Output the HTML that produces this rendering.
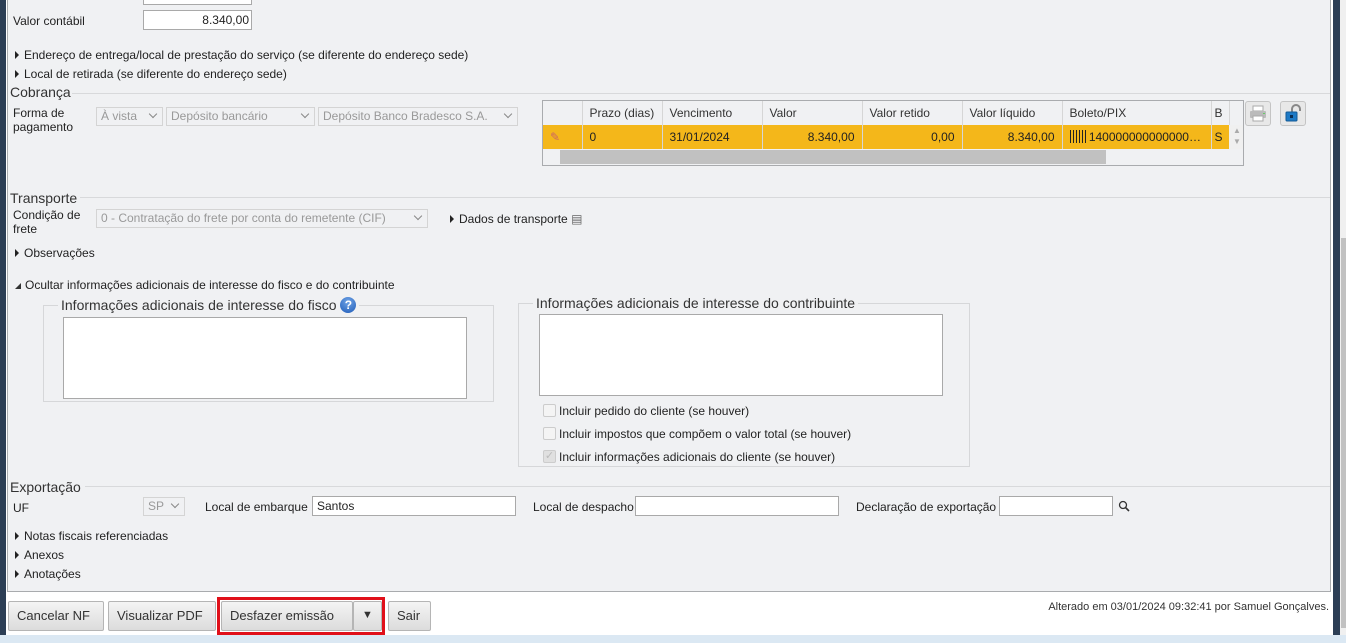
<!DOCTYPE html>
<html><head><meta charset="utf-8"><style>
*{box-sizing:border-box;margin:0;padding:0}
body{width:1346px;height:643px;overflow:hidden;background:#fff;font-family:"Liberation Sans",sans-serif;font-size:12px;color:#222;position:relative}
.a{position:absolute;white-space:nowrap}
.panel{position:absolute;left:7px;top:-2px;width:1324px;height:594px;background:#f0f1f3;border:1px solid #a9abae}
.inp{position:absolute;background:#fff;border:1px solid #a9a9a9;height:20px;font-size:12px;padding:2px 4px}
.sel{position:absolute;border:1px solid #d4d4d4;height:19px;color:#999;padding:1px 4px;background:#f0f1f3;font-size:12px;overflow:hidden}
.sel:after{content:"";position:absolute;right:6px;top:3px;width:5px;height:5px;border-right:1.5px solid #888;border-bottom:1.5px solid #888;transform:rotate(45deg)}
.tri{display:inline-block;width:0;height:0;border-left:4px solid #222;border-top:4px solid transparent;border-bottom:4px solid transparent;margin-right:5px;vertical-align:0}
.sec{font-size:14px;color:#333}
.hr{position:absolute;height:1px;background:#d8d9db}
.fs{position:absolute;border:1px solid #d6d7d9}
.ta{position:absolute;background:#fff;border:1px solid #a9a9a9}
.cb{position:absolute;width:13px;height:13px;border:1px solid #ccc;background:#f4f4f4;border-radius:2px}
.btn{position:absolute;top:601px;height:30px;background:linear-gradient(#f4f4f4,#dcdcdc);border:1px solid #b5b5b5;border-radius:2px;font-size:13px;color:#333;padding:6px 8px}
table{border-collapse:collapse;table-layout:fixed}
td{border-right:1px solid #d6d6d6;padding:0 7px;height:24px;overflow:hidden}
</style></head><body>
<div class="a" style="left:0;top:0;width:6px;height:643px;background:#2c3e55"></div>
<div class="a" style="left:1333px;top:0;width:7px;height:643px;background:#2c3e55"></div>
<div class="a" style="left:1340px;top:0;width:6px;height:643px;background:#f0f0f0"></div>
<div class="a" style="left:1341px;top:238px;width:5px;height:390px;background:#c1c1c1"></div>
<div class="a" style="left:0;top:635px;width:1346px;height:8px;background:#dbe8f3"></div>
<div class="panel"></div>

<div class="inp" style="left:143px;top:-10px;width:109px;height:15px"></div>
<div class="a" style="left:13px;top:14px">Valor contábil</div>
<div class="inp" style="left:143px;top:10px;width:109px;text-align:right;padding-right:2px">8.340,00</div>
<div class="a" style="left:15px;top:48px"><span class="tri"></span>Endereço de entrega/local de prestação do serviço (se diferente do endereço sede)</div>
<div class="a" style="left:15px;top:67px"><span class="tri"></span>Local de retirada (se diferente do endereço sede)</div>

<div class="a sec" style="left:10px;top:84px">Cobrança</div><div class="hr" style="left:72px;top:93px;width:1258px"></div>
<div class="a" style="left:13px;top:106px;line-height:14px">Forma de<br>pagamento</div>
<div class="sel" style="left:96px;top:107px;width:67px">À vista</div>
<div class="sel" style="left:166px;top:107px;width:149px">Depósito bancário</div>
<div class="sel" style="left:318px;top:107px;width:200px;padding-right:16px">Depósito Banco Bradesco S.A. aç</div>

<div class="a" style="left:542px;top:100px;width:702px;height:66px;border:1px solid #a9abae;background:#f0f1f3;overflow:hidden">
<table style="font-size:12px;color:#333;white-space:nowrap;width:686px">
<colgroup><col style="width:39px"><col style="width:80px"><col style="width:100px"><col style="width:100px"><col style="width:100px"><col style="width:100px"><col style="width:149px"><col style="width:18px"></colgroup>
<tr style="background:#f0f1f3"><td></td><td>Prazo (dias)</td><td>Vencimento</td><td>Valor</td><td>Valor retido</td><td>Valor líquido</td><td>Boleto/PIX</td><td style="padding:0 3px">B</td></tr>
<tr style="background:#f4b71a;color:#222"><td style="color:#c66">✎</td><td>0</td><td>31/01/2024</td><td style="text-align:right">8.340,00</td><td style="text-align:right">0,00</td><td style="text-align:right">8.340,00</td><td><span style="display:inline-block;width:16px;height:13px;vertical-align:-2px;background:repeating-linear-gradient(90deg,#222 0 1px,transparent 1px 3px)"></span> 140000000000000…</td><td style="padding:0 3px">S</td></tr>
</table>
<div class="a" style="left:17px;top:49px;width:546px;height:14px;background:#c1c1c1"></div>
<div class="a" style="left:686px;top:24px;width:16px;height:24px;background:#f0f0f0;color:#aaa;font-size:8px;text-align:center;line-height:11px">▲<br>▼</div>
</div>
<div class="a" style="left:1245px;top:101px;width:26px;height:25px;border:1px solid #c4c4c4;border-radius:3px;background:#e8e8e8">
<svg width="24" height="23" style="position:absolute;left:0;top:0"><rect x="7" y="4" width="10" height="5" fill="#fff" stroke="#aaa"/><rect x="4" y="9" width="16" height="7" rx="1" fill="#bbb"/><rect x="7" y="14" width="10" height="5" fill="#fff" stroke="#aaa"/><rect x="17" y="11" width="2" height="1" fill="#6c6"/></svg></div>
<div class="a" style="left:1280px;top:101px;width:26px;height:25px;border:1px solid #c4c4c4;border-radius:3px;background:#e8e8e8">
<svg width="24" height="23" style="position:absolute;left:0;top:0"><path d="M11 11 V7 a4 4 0 0 1 8 0 V9" fill="none" stroke="#888" stroke-width="2"/><rect x="5" y="10" width="11" height="9" rx="1" fill="#1e7ac6" stroke="#135a96"/><rect x="9" y="13" width="3" height="3" fill="#0b2f55"/></svg></div>

<div class="a sec" style="left:10px;top:190px">Transporte</div><div class="hr" style="left:80px;top:197px;width:1250px"></div>
<div class="a" style="left:13px;top:208px;line-height:14px">Condição de<br>frete</div>
<div class="sel" style="left:96px;top:209px;width:332px">0 - Contratação do frete por conta do remetente (CIF)</div>
<div class="a" style="left:450px;top:212px"><span class="tri"></span>Dados de transporte <span style="color:#666">▤</span></div>
<div class="a" style="left:15px;top:246px"><span class="tri"></span>Observações</div>
<div class="a" style="left:15px;top:278px"><span style="display:inline-block;width:0;height:0;border-left:6px solid transparent;border-bottom:6px solid #333;margin-right:4px"></span>Ocultar informações adicionais de interesse do fisco e do contribuinte</div>

<div class="fs" style="left:43px;top:305px;width:451px;height:97px"></div>
<div class="a" style="left:58px;top:297px;font-size:14px;color:#333;background:#f0f1f3;padding:0 3px">Informações adicionais de interesse do fisco <span style="display:inline-block;width:16px;height:16px;border-radius:50%;background:radial-gradient(circle at 50% 30%,#6fa3e6,#1f5cb8);color:#fff;font-size:12px;font-weight:bold;text-align:center;line-height:16px;vertical-align:1px">?</span></div>
<div class="ta" style="left:63px;top:317px;width:404px;height:82px"></div>

<div class="fs" style="left:518px;top:303px;width:452px;height:164px"></div>
<div class="a" style="left:533px;top:295px;font-size:14px;color:#333;background:#f0f1f3;padding:0 3px">Informações adicionais de interesse do contribuinte</div>
<div class="ta" style="left:539px;top:314px;width:404px;height:82px"></div>
<div class="cb" style="left:543px;top:404px"></div><div class="a" style="left:559px;top:404px">Incluir pedido do cliente (se houver)</div>
<div class="cb" style="left:543px;top:427px"></div><div class="a" style="left:559px;top:427px">Incluir impostos que compõem o valor total (se houver)</div>
<div class="cb" style="left:543px;top:450px;color:#bbb;font-size:11px;line-height:11px;text-align:center;background:#e0e0e0">✓</div><div class="a" style="left:559px;top:450px">Incluir informações adicionais do cliente (se houver)</div>

<div class="a sec" style="left:10px;top:479px">Exportação</div><div class="hr" style="left:85px;top:486px;width:1245px"></div>
<div class="a" style="left:13px;top:501px">UF</div>
<div class="sel" style="left:143px;top:497px;width:42px">SP</div>
<div class="a" style="left:205px;top:500px">Local de embarque</div>
<div class="inp" style="left:312px;top:496px;width:204px;padding-top:2px">Santos</div>
<div class="a" style="left:533px;top:500px">Local de despacho</div>
<div class="inp" style="left:635px;top:496px;width:204px"></div>
<div class="a" style="left:856px;top:500px">Declaração de exportação</div>
<div class="inp" style="left:999px;top:496px;width:114px"></div>
<svg class="a" style="left:1118px;top:500px" width="12" height="12"><circle cx="5" cy="5" r="3.5" fill="none" stroke="#333" stroke-width="1.3"/><path d="M7.5 7.5 L11 11" stroke="#333" stroke-width="1.6"/></svg>
<div class="a" style="left:15px;top:529px"><span class="tri"></span>Notas fiscais referenciadas</div>
<div class="a" style="left:15px;top:548px"><span class="tri"></span>Anexos</div>
<div class="a" style="left:15px;top:567px"><span class="tri"></span>Anotações</div>

<div class="btn" style="left:8px;width:96px">Cancelar NF</div>
<div class="btn" style="left:108px;width:108px">Visualizar PDF</div>
<div class="a" style="left:217px;top:597px;width:168px;height:38px;border:3px solid #e0101a"></div>
<div class="btn" style="left:221px;width:132px">Desfazer emissão</div>
<div class="btn" style="left:353px;width:29px;font-size:11px;text-align:center;padding:7px 0">▼</div>
<div class="btn" style="left:388px;width:43px">Sair</div>
<div class="a" style="right:17px;top:601px;font-size:11px;color:#333">Alterado em 03/01/2024 09:32:41 por Samuel Gonçalves.</div>
</body></html>
